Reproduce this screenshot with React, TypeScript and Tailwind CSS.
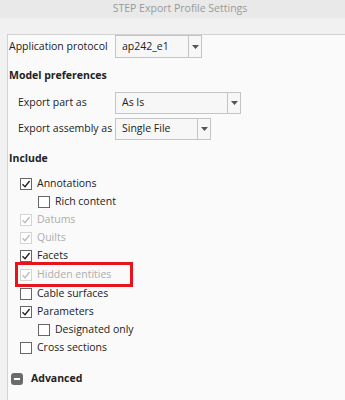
import React from 'react';

const font = { fontFamily: '"Open Sans", "Noto Sans", sans-serif' };

function Arrow() {
  return (
    <svg width="7" height="4" viewBox="0 0 7 4">
      <path d="M0 0H7L3.5 4Z" fill="#555" />
    </svg>
  );
}

function Select({ value, width, height }: { value: string; width: string; height: string }) {
  return (
    <div className={`flex ${height} ${width} border border-[#c4c4c4] bg-[#f7f7f7]`}>
      <div className="flex-1 flex items-center pl-[6px] text-[10.5px] text-[#222] whitespace-nowrap">{value}</div>
      <div className="w-[13px] border-l border-[#c4c4c4] flex items-center justify-center">
        <Arrow />
      </div>
    </div>
  );
}

function Check({ label, checked, disabled, indent, tall }: { label: string; checked?: boolean; disabled?: boolean; indent?: boolean; tall?: boolean }) {
  const box = disabled ? 'border-[#d4d4d4]' : 'border-[#666]';
  const mark = disabled ? '#bbbbbb' : '#222';
  return (
    <div className={`flex items-center ${tall ? 'h-[19px]' : 'h-[18px]'} gap-[5px] ${indent ? 'pl-[30px]' : 'pl-[12px]'}`}>
      <div className={`w-[12px] h-[12px] border ${box} bg-white flex items-center justify-center`}>
        {checked && (
          <svg width="10" height="10" viewBox="0 0 10 10">
            <path d="M1.5 5.2L4 7.7L8.6 2" stroke={mark} strokeWidth="1.4" fill="none" />
          </svg>
        )}
      </div>
      <span className={`text-[10.5px] whitespace-nowrap ${disabled ? 'text-[#adadad]' : 'text-[#222]'}`}>{label}</span>
    </div>
  );
}

export default function App() {
  return (
    <div className="w-[345px] h-[400px] bg-[#f1f1f1] overflow-hidden" style={font}>
      {/* Title */}
      <div className="h-[18px] bg-[#e9e9e9] flex items-center justify-center pl-[15px] text-[10.5px] text-[#999]">
        STEP Export Profile Settings
      </div>
      <div className="h-[16px]" />

      {/* Panel */}
      <div className="ml-[7px] h-[366px] border-l border-t border-[#d2d2d2] bg-[#fafafa]">
        <div className="flex items-center h-[23px]">
          <span className="w-[107px] pl-[1px] text-[10.5px] text-[#222] whitespace-nowrap">Application protocol</span>
          <Select value="ap242_e1" width="w-[87px]" height="h-[23px]" />
        </div>

        <div className="mt-[9px] pl-[1px] text-[10.5px] font-bold text-[#222] h-[18px] flex items-center">Model preferences</div>

        <div className="mt-[7px] flex items-center h-[22px]">
          <span className="w-[107px] pl-[10px] text-[10.5px] text-[#222] whitespace-nowrap">Export part as</span>
          <Select value="As Is" width="w-[126px]" height="h-[22px]" />
        </div>
        <div className="mt-[4px] flex items-center h-[22px]">
          <span className="w-[107px] pl-[10px] text-[10.5px] text-[#222] whitespace-nowrap">Export assembly as</span>
          <Select value="Single File" width="w-[96px]" height="h-[22px]" />
        </div>

        <div className="mt-[10px] pl-[1px] text-[10.5px] font-bold text-[#222] h-[18px] flex items-center">Include</div>

        <div className="mt-[7px] flex flex-col">
          <Check label="Annotations" checked />
          <Check label="Rich content" indent />
          <Check label="Datums" checked disabled />
          <Check label="Quilts" checked disabled />
          <Check label="Facets" checked />
          <div className="relative">
            <Check label="Hidden entities" checked disabled tall />
            <div className="absolute left-[7px] top-[-3px] w-[118px] h-[25px] border-[3px] border-[#e8141c]" />
          </div>
          <Check label="Cable surfaces" tall />
          <Check label="Parameters" checked />
          <Check label="Designated only" indent />
          <Check label="Cross sections" />
        </div>

        <div className="mt-[13px] flex items-center gap-[8px] pl-[3px] h-[18px]">
          <div className="w-[12px] h-[12px] rounded-[3px] bg-[#6b6b6b] flex items-center justify-center">
            <div className="w-[6px] h-[2px] bg-white" />
          </div>
          <span className="text-[10.5px] font-bold text-[#222]">Advanced</span>
        </div>
      </div>
    </div>
  );
}
